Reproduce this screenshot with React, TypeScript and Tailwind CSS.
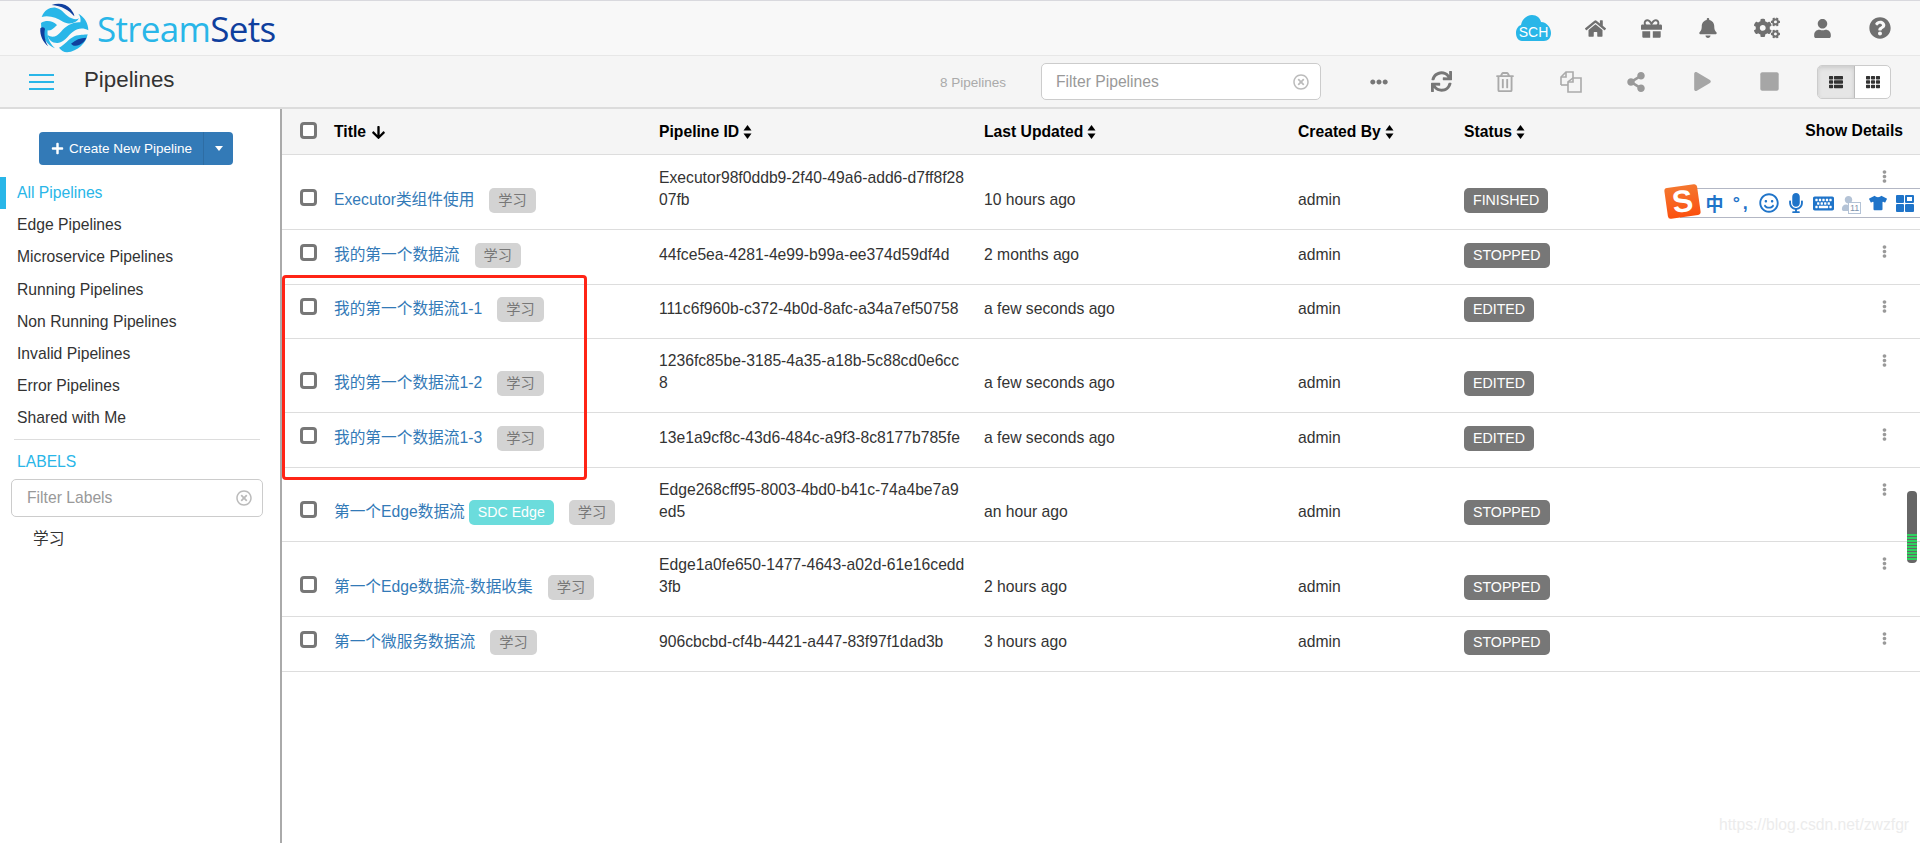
import React from "react";
import {
  FaArrowDown,
  FaBell,
  FaCogs,
  FaEllipsisH,
  FaEllipsisV,
  FaGift,
  FaHome,
  FaKeyboard,
  FaMicrophone,
  FaPlay,
  FaPlus,
  FaQuestionCircle,
  FaRegSmile,
  FaRegTimesCircle,
  FaRegTrashAlt,
  FaShareAlt,
  FaStop,
  FaSync,
  FaTh,
  FaThList,
  FaTshirt,
  FaUser,
} from "react-icons/fa";

const SANS = "font-['Liberation_Sans','Noto_Sans_CJK_SC',sans-serif]";

const NAV_ITEMS = [
  "All Pipelines",
  "Edge Pipelines",
  "Microservice Pipelines",
  "Running Pipelines",
  "Non Running Pipelines",
  "Invalid Pipelines",
  "Error Pipelines",
  "Shared with Me",
];

const PIPELINES = [
  { h: "h-[75px]", title: "Executor类组件使用", id: "Executor98f0ddb9-2f40-49a6-add6-d7ff8f28\n07fb", updated: "10 hours ago", status: "FINISHED" },
  { h: "h-[55px]", title: "我的第一个数据流", id: "44fce5ea-4281-4e99-b99a-ee374d59df4d", updated: "2 months ago", status: "STOPPED" },
  { h: "h-[54px]", title: "我的第一个数据流1-1", id: "111c6f960b-c372-4b0d-8afc-a34a7ef50758", updated: "a few seconds ago", status: "EDITED" },
  { h: "h-[74px]", title: "我的第一个数据流1-2", id: "1236fc85be-3185-4a35-a18b-5c88cd0e6cc\n8", updated: "a few seconds ago", status: "EDITED" },
  { h: "h-[55px]", title: "我的第一个数据流1-3", id: "13e1a9cf8c-43d6-484c-a9f3-8c8177b785fe", updated: "a few seconds ago", status: "EDITED" },
  { h: "h-[74px]", title: "第一个Edge数据流", id: "Edge268cff95-8003-4bd0-b41c-74a4be7a9\ned5", updated: "an hour ago", status: "STOPPED", edge: true },
  { h: "h-[75px]", title: "第一个Edge数据流-数据收集", id: "Edge1a0fe650-1477-4643-a02d-61e16cedd\n3fb", updated: "2 hours ago", status: "STOPPED" },
  { h: "h-[55px]", title: "第一个微服务数据流", id: "906cbcbd-cf4b-4421-a447-83f97f1dad3b", updated: "3 hours ago", status: "STOPPED" },
];

function Logo() {
  return (
    <svg viewBox="0 0 150 150" className="w-[50px] h-[50px]">
      <path fill="#0f3f9e" d="M38 6 C58 -2 82 2 95 18 C102 27 106 34 106 40 C90 22 68 8 38 6Z" />
      <path fill="#29b6e8" d="M8 42 C16 20 34 12 50 14 C70 17 78 38 98 46 C108 50 114 50 120 46 C112 62 90 66 72 56 C52 45 32 36 8 42Z" />
      <path fill="#29b6e8" d="M118 32 C136 42 148 60 148 82 C134 74 118 74 102 86 C86 98 76 118 56 120 C40 121 28 110 26 96 C40 106 54 100 66 86 C80 70 100 56 124 58 C126 48 124 40 118 32Z" />
      <path fill="#29b6e8" d="M6 60 C22 50 42 54 54 66 C46 74 38 84 26 82 C24 96 28 118 48 136 C26 128 6 104 6 60Z" />
      <path fill="#0f3f9e" d="M4 76 C10 70 16 72 18 78 C14 94 18 116 28 130 C12 118 2 98 4 76Z" />
      <path fill="#29b6e8" d="M60 134 C78 126 88 108 106 100 C122 94 136 96 146 94 C142 120 116 146 84 148 C74 148 66 142 60 134Z" />
      <path fill="#0f3f9e" d="M96 122 C110 110 124 104 142 104 C136 118 124 126 110 128 C104 129 100 126 96 122Z" />
    </svg>
  );
}

function SchCloud() {
  return (
    <div className="relative w-[35px] h-[26px]">
      <svg viewBox="0 0 35 26" className="w-[35px] h-[26px]">
        <path fill="#29b6e8" d="M6 26 C2 26 0 22 0 18 C0 14 2 11 5 10 C6 4 11 0 16 0 C21 0 24 3 25 7 C31 7 35 13 35 18 C35 23 32 26 28 26Z" />
      </svg>
      <span className={`absolute inset-x-0 top-[9px] text-center text-[14px] leading-[16px] text-white ${SANS}`}>SCH</span>
    </div>
  );
}

function FilesIcon() {
  return (
    <svg viewBox="0 0 22 22" className="w-[22px] h-[22px]" fill="none" stroke="#aaa" strokeWidth="1.6">
      <path d="M1 14 V6 L6 1 H13 V7" />
      <path d="M6 1 V6 H1" />
      <path d="M1 14 H8" />
      <path d="M8 21 V11 L13 7 H21 V21 Z" />
      <path d="M13 7 V11 H8" />
    </svg>
  );
}

function SortIcon() {
  return (
    <svg viewBox="0 0 8 14" className="w-[9px] h-[14px] ml-[4px]" fill="#000">
      <path d="M4 0 L8 5.5 H0 Z" />
      <path d="M4 14 L8 8.5 H0 Z" />
    </svg>
  );
}

function Checkbox() {
  return <span className="block w-[17px] h-[17px] border-[3px] border-[#777] rounded-[4px] bg-white" />;
}

function HeaderCell({ label, down }: { label: string; down?: boolean }) {
  return (
    <div className="flex items-center font-bold text-black">
      {label}
      {down ? <FaArrowDown className="ml-[5px] text-[15px]" /> : <SortIcon />}
    </div>
  );
}

function ClearIcon() {
  return <FaRegTimesCircle className="text-[#bbb] text-[16px]" />;
}

function Badge({ children, className }: { children: React.ReactNode; className: string }) {
  return <span className={`inline-flex items-center h-[25px] rounded-[5px] text-[14.2px] leading-none ${className}`}>{children}</span>;
}

function SogouBar() {
  return (
    <>
      <div className="absolute left-[1680px] right-0 top-[188px] h-[30px] bg-white border-y border-[#b3b7c4] flex items-center pl-[21px] text-[#1f74c9]">
        <span className="w-[27.2px] text-center text-[18px] font-bold font-['Noto_Sans_CJK_SC',sans-serif]">中</span>
        <span className="w-[27.2px] text-center text-[18px] font-bold tracking-[3px] font-['Liberation_Sans',sans-serif]">°,</span>
        <span className="w-[27.2px] flex justify-center"><FaRegSmile className="text-[20px]" /></span>
        <span className="w-[27.2px] flex justify-center"><FaMicrophone className="text-[20px]" /></span>
        <span className="w-[27.2px] flex justify-center"><FaKeyboard className="text-[21px]" /></span>
        <span className="w-[27.2px] flex justify-center relative pr-[4px]">
          <FaUser className="text-[15px] text-[#b4c3d6]" />
          <span className="absolute left-[11px] top-[6px] text-[9px] leading-[10px] bg-white border border-[#b4c3d6] px-[1px] text-[#7f93ad] font-['Liberation_Sans',sans-serif]">11</span>
        </span>
        <span className="w-[27.2px] flex justify-center"><FaTshirt className="text-[18px]" /></span>
        <span className="w-[27.2px] grid grid-cols-2 gap-[1px] px-[5px]">
          <span className="h-[8px] rounded-[1px] bg-[#1f74c9]" />
          <span className="h-[8px] rounded-[1px] border-2 border-[#1f74c9]" />
          <span className="h-[8px] rounded-[1px] bg-[#1f74c9]" />
          <span className="h-[8px] rounded-[1px] bg-[#1f74c9]" />
        </span>
      </div>
      <div className="absolute left-[1666px] top-[186px] w-[33px] h-[31px] -rotate-[8deg] rounded-[3px] bg-gradient-to-b from-[#f4762e] to-[#fb4f0c] flex items-center justify-center text-white font-bold text-[31px] leading-none font-['Liberation_Sans',sans-serif]">
        S
      </div>
    </>
  );
}

function LevelMeter() {
  return (
    <div className="absolute left-[1907px] top-[491px] w-[10px] h-[72px] rounded-[4px] bg-[#666] flex flex-col justify-end gap-[1px] pb-[3px]">
      {[...Array(9)].map((_, idx) => (
        <span key={idx} className="h-[2px] bg-[#2fd15f]" />
      ))}
    </div>
  );
}

export default function App() {
  return (
    <div className={`relative w-[1920px] h-[843px] overflow-hidden bg-white text-[15.7px] leading-[22px] text-[#333] ${SANS}`}>
      {/* top navbar */}
      <div className="h-[56px] bg-[#f8f8f8] border-t border-t-[#d9d9de] border-b border-b-[#e7e7e7] flex items-center">
        <div className="ml-[39px]">
          <Logo />
        </div>
        <div className="ml-[8px] text-[35px] leading-none tracking-[-0.7px] font-['Open_Sans',sans-serif]">
          <span className="text-[#29b6e8]">Stream</span>
          <span className="text-[#0f3f9e]">Sets</span>
        </div>
        <div className="ml-auto flex items-center pr-[29px] text-[#707070]">
          <SchCloud />
          <FaHome className="ml-[34px] text-[21px]" />
          <FaGift className="ml-[35px] text-[21px]" />
          <FaBell className="ml-[36px] text-[20px]" />
          <FaCogs className="ml-[36px] text-[26px]" />
          <FaUser className="ml-[33px] text-[19px]" />
          <FaQuestionCircle className="ml-[37px] text-[22px]" />
        </div>
      </div>

      {/* sub header */}
      <div className="h-[53px] bg-[#f5f5f5] border-b-[2px] border-b-[#dcdcdc] flex items-center">
        <div className="ml-[29px] w-[25px] flex flex-col gap-[5px]">
          <span className="h-[2px] bg-[#29b6e8]" />
          <span className="h-[2px] bg-[#29b6e8]" />
          <span className="h-[2px] bg-[#29b6e8]" />
        </div>
        <h1 className="ml-[30px] text-[22.3px] leading-none mb-[3px]">Pipelines</h1>
        <div className="ml-auto flex items-center pr-[29px]">
          <span className="text-[13.5px] text-[#aaa] mt-[3px]">8 Pipelines</span>
          <div className="ml-[35px] w-[280px] h-[37px] bg-white border border-[#ccc] rounded-[5px] flex items-center pl-[14px] pr-[11px]">
            <span className="text-[#999]">Filter Pipelines</span>
            <span className="ml-auto"><ClearIcon /></span>
          </div>
          <FaEllipsisH className="ml-[49px] text-[18px] text-[#777]" />
          <FaSync className="ml-[43px] text-[21px] text-[#777]" />
          <FaRegTrashAlt className="ml-[43px] text-[20px] text-[#aaa]" />
          <span className="ml-[45px]"><FilesIcon /></span>
          <FaShareAlt className="ml-[44px] text-[20px] text-[#999]" />
          <FaPlay className="ml-[47px] text-[19px] text-[#a6a6a6]" />
          <FaStop className="ml-[47px] text-[21px] text-[#a6a6a6]" />
          <div className="ml-[37px] w-[74px] h-[34px] flex border border-[#ccc] rounded-[5px] overflow-hidden bg-white">
            <div className="w-[37px] flex items-center justify-center bg-[#e6e6e6] border-r border-[#bbb] shadow-[inset_0_2px_4px_rgba(0,0,0,0.12)]">
              <FaThList className="text-[14px] text-[#333]" />
            </div>
            <div className="flex-1 flex items-center justify-center">
              <FaTh className="text-[14px] text-[#333]" />
            </div>
          </div>
        </div>
      </div>

      <div className="flex">
        {/* sidebar */}
        <aside className="w-[282px] h-[734px] shrink-0 border-r-[2px] border-r-[#aaa]">
          <div className="ml-[39px] mt-[23px] w-[194px] h-[33px] flex rounded-[4px] bg-[#337ab7] text-white text-[13.5px]">
            <div className="flex-1 flex items-center pl-[12px] gap-[5px]">
              <FaPlus className="text-[13px]" />
              <span>Create New Pipeline</span>
            </div>
            <div className="w-[30px] border-l border-[#2e6da4] flex items-center justify-center">
              <span className="w-0 h-0 border-x-[4px] border-x-transparent border-t-[5px] border-t-white" />
            </div>
          </div>
          <nav className="mt-[12px]">
            {NAV_ITEMS.map((item, idx) => (
              <div
                key={item}
                className={`h-[32.2px] flex items-center ${
                  idx === 0 ? "border-l-[6px] border-l-[#29b6e8] pl-[11px] text-[#29b6e8]" : "pl-[17px]"
                }`}
              >
                {item}
              </div>
            ))}
          </nav>
          <div className="mt-[4px] ml-[14px] w-[246px] border-t border-t-[#ddd]" />
          <div className="mt-[11px] pl-[17px] text-[#29b6e8]">LABELS</div>
          <div className="mt-[6px] ml-[11px] w-[252px] h-[38px] border border-[#ccc] rounded-[5px] flex items-center pl-[15px] pr-[10px]">
            <span className="text-[#999]">Filter Labels</span>
            <span className="ml-auto"><ClearIcon /></span>
          </div>
          <div className="mt-[11px] pl-[33px]">学习</div>
        </aside>

        {/* pipelines table */}
        <main className="flex-1 min-w-0">
          <table className="w-full table-fixed border-collapse">
            <colgroup>
              <col className="w-[52px]" />
              <col className="w-[325px]" />
              <col className="w-[325px]" />
              <col className="w-[314px]" />
              <col className="w-[166px]" />
              <col />
            </colgroup>
            <thead>
              <tr className="h-[45px] bg-[#f5f5f5] border-b border-b-[#ddd]">
                <th className="pl-[18px] pb-[2px] text-left font-normal">
                  <Checkbox />
                </th>
                <th className="pt-[2px] text-left"><HeaderCell label="Title" down /></th>
                <th className="pt-[2px] text-left"><HeaderCell label="Pipeline ID" /></th>
                <th className="pt-[2px] text-left"><HeaderCell label="Last Updated" /></th>
                <th className="pt-[2px] text-left"><HeaderCell label="Created By" /></th>
                <th className="pt-[2px] text-left"><HeaderCell label="Status" /></th>
              </tr>
            </thead>
            <tbody>
              {PIPELINES.map((row) => (
                <tr key={row.id} className={`${row.h} border-b border-b-[#ddd]`}>
                  <td className="pl-[18px] pb-[23px] align-bottom">
                    <Checkbox />
                  </td>
                  <td className="pb-[16px] align-bottom">
                    <div className="flex items-center whitespace-nowrap">
                      <a className="text-[#337ab7]">{row.title}</a>
                      {row.edge && <Badge className="ml-[4px] px-[9px] bg-[#6bdcdc] text-white">SDC Edge</Badge>}
                      <Badge className="ml-[15px] px-[9px] bg-[#d3d3d3] text-[#777]">学习</Badge>
                    </div>
                  </td>
                  <td className="pb-[18px] align-bottom whitespace-pre">{row.id}</td>
                  <td className="pb-[18px] align-bottom">{row.updated}</td>
                  <td className="pb-[18px] align-bottom">admin</td>
                  <td className="pb-[16px] align-bottom relative">
                    <Badge className="px-[9px] bg-[#777] text-white">{row.status}</Badge>
                    <FaEllipsisV className="absolute left-[414px] top-[15px] text-[13px] text-[#999]" />
                  </td>
                </tr>
              ))}
            </tbody>
          </table>
        </main>
      </div>

      {/* Show Details sits apart from the column grid */}
      <div className="absolute right-[17px] top-[120px] font-bold text-black">Show Details</div>

      {/* annotation box */}
      <div className="absolute left-[282px] top-[275px] w-[305px] h-[205px] border-[3px] border-[#ff2416] rounded-[4px]" />

      <SogouBar />
      <LevelMeter />

      <div className="absolute left-[1719px] top-[814px] text-[#ececec]">https://blog.csdn.net/zwzfgr</div>
    </div>
  );
}
